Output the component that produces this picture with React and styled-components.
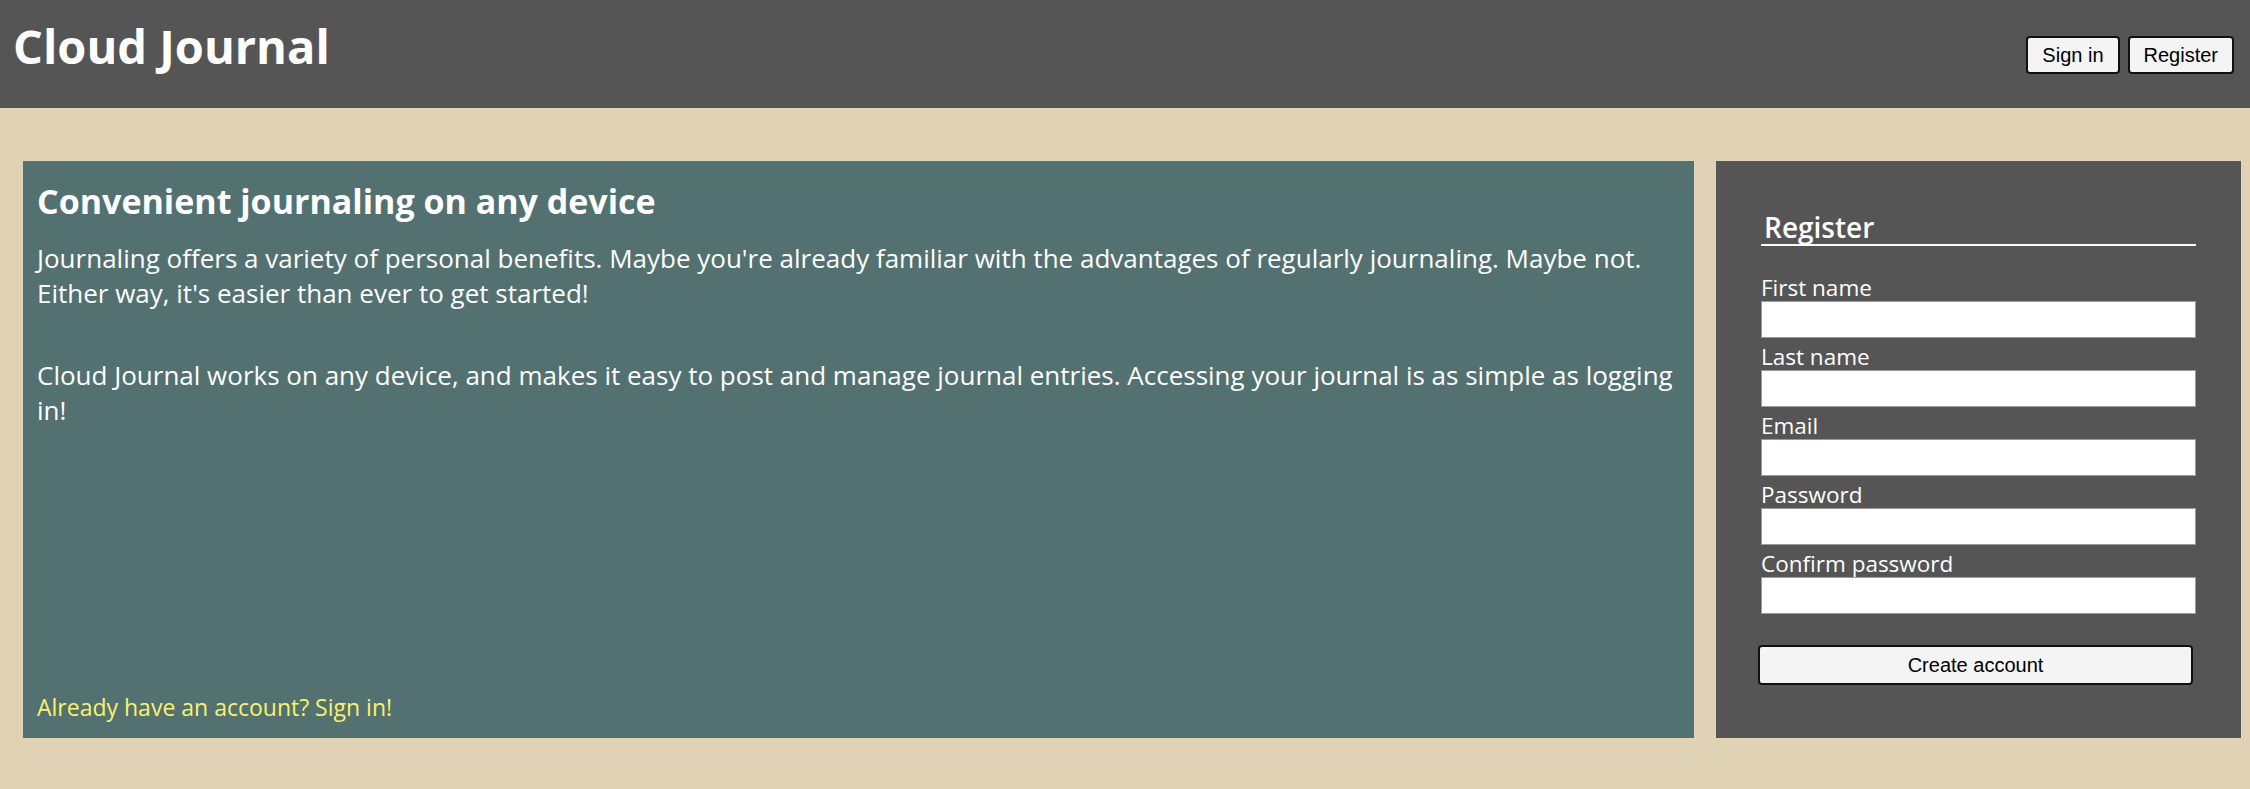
import styled, { createGlobalStyle } from 'styled-components'

const GlobalStyle = createGlobalStyle`
    html, body {
        margin: 0;
        padding: 0;
        background: #dfd2b5;
        font-family: "Open Sans", "Noto Sans", sans-serif;
    }
    * {
        box-sizing: border-box;
    }
`;

const Header = styled.header`
    display: flex;
    flex-direction: row;
    justify-content: space-between;
    align-items: flex-start;
    height: 108px;
    background: #555555;
`;

const Title = styled.h1`
    margin: 16px 0 0 13px;
    font-size: 47px;
    line-height: 60px;
    font-weight: 700;
    color: white;
`;

const Nav = styled.div`
    display: flex;
    flex-direction: row;
    gap: 8px;
    margin: 36px 16px 0 0;
`;

const Button = styled.button`
    height: ${props => props.$tall ? '40px' : '38px'};
    padding: 0 14px;
    border: 2px solid #111;
    border-radius: 4px;
    background: #f4f4f4;
    color: black;
    font-family: "Liberation Sans", Arial, sans-serif;
    font-size: 20px;
    cursor: pointer;
`;

const Main = styled.main`
    display: flex;
    flex-direction: row;
    gap: 22px;
    padding: 53px 9px 0 23px;
`;

const Intro = styled.section`
    flex: 1;
    display: flex;
    flex-direction: column;
    height: 577px;
    padding: 16px 14px 13px 14px;
    background: #527170;
    color: white;
`;

const IntroHeading = styled.h2`
    margin: 0 0 16px 0;
    font-size: 34px;
    line-height: 48px;
    font-weight: 700;
`;

const Paragraph = styled.p`
    margin: 0 0 47px 0;
    font-size: 26px;
    line-height: 35px;
`;

const SignInLink = styled.a`
    margin-top: auto;
    font-size: 23px;
    line-height: 35px;
    color: #fbf26b;
    text-decoration: none;
    cursor: pointer;
`;

const FormPanel = styled.section`
    width: 525px;
    height: 577px;
    padding: 49px 45px 0 45px;
    background: #555555;
    color: white;
`;

const FormHeading = styled.h3`
    margin: 0 0 23px 0;
    padding-left: 3px;
    font-size: 28px;
    line-height: 34px;
    font-weight: 600;
    border-bottom: 2px solid white;
`;

const Field = styled.div`
    display: flex;
    flex-direction: column;
`;

const Label = styled.label`
    padding-top: 5px;
    font-size: 22.5px;
    line-height: 27px;
`;

const Input = styled.input`
    height: 37px;
    width: 100%;
    border: 1px solid #9a9a9a;
    background: white;
    outline: none;
    font-size: 18px;
`;

const Submit = styled(Button)`
    width: 435px;
    margin: 31px 0 0 -3px;
`;

const fields = [
    { id: 'first', label: 'First name', type: 'text' },
    { id: 'last', label: 'Last name', type: 'text' },
    { id: 'email', label: 'Email', type: 'email' },
    { id: 'password', label: 'Password', type: 'password' },
    { id: 'confirm', label: 'Confirm password', type: 'password' },
];

const App = () => {
    return (
        <>
            <GlobalStyle />
            <Header>
                <Title>Cloud Journal</Title>
                <Nav>
                    <Button>Sign in</Button>
                    <Button>Register</Button>
                </Nav>
            </Header>
            <Main>
                <Intro>
                    <IntroHeading>Convenient journaling on any device</IntroHeading>
                    <Paragraph>
                        Journaling offers a variety of personal benefits. Maybe you're already familiar with the advantages of regularly journaling. Maybe not. Either way, it's easier than ever to get started!
                    </Paragraph>
                    <Paragraph>
                        Cloud Journal works on any device, and makes it easy to post and manage journal entries. Accessing your journal is as simple as logging in!
                    </Paragraph>
                    <SignInLink>Already have an account? Sign in!</SignInLink>
                </Intro>
                <FormPanel>
                    <form onSubmit={e => e.preventDefault()}>
                        <FormHeading>Register</FormHeading>
                        {fields.map(f => (
                            <Field key={f.id}>
                                <Label htmlFor={f.id}>{f.label}</Label>
                                <Input id={f.id} type={f.type} />
                            </Field>
                        ))}
                        <Submit $tall type="submit">Create account</Submit>
                    </form>
                </FormPanel>
            </Main>
        </>
    )
}

export default App;
